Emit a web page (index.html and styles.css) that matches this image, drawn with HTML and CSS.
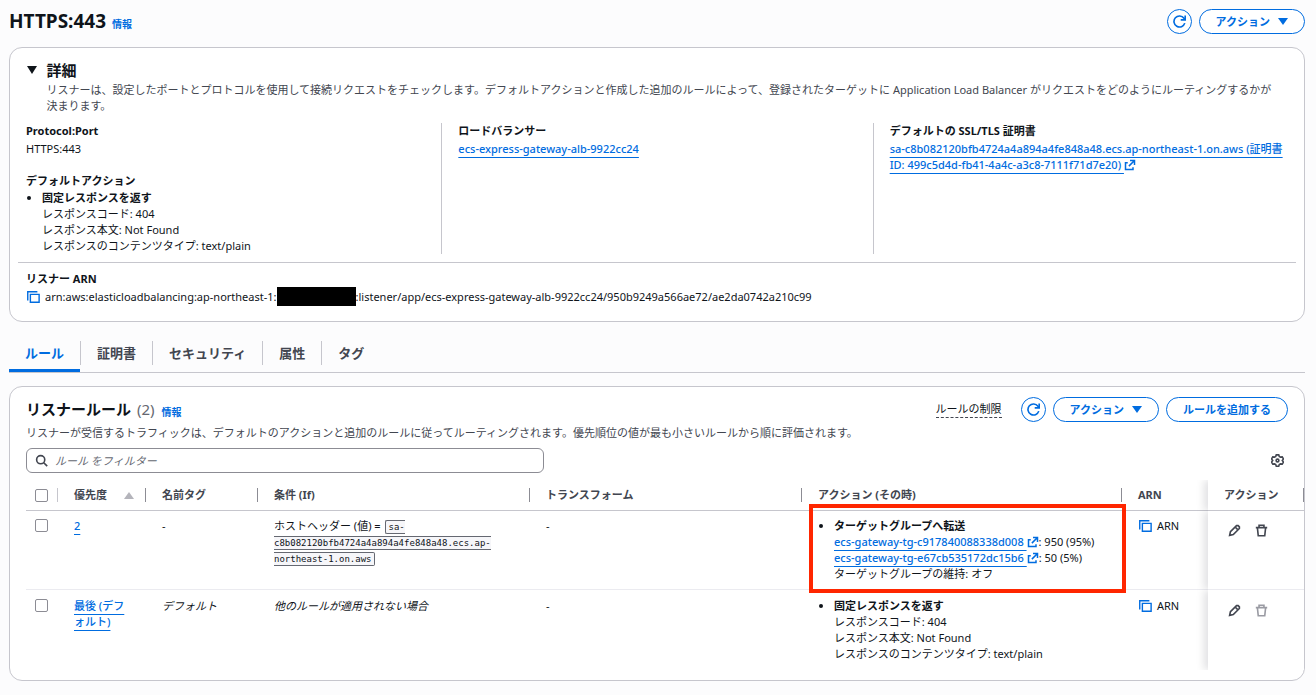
FILE: index.html
```html
<!DOCTYPE html>
<html lang="ja">
<head>
  <meta charset="UTF-8" />
  <meta name="viewport" content="width=device-width, initial-scale=1" />
  <title>HTTPS:443 - リスナー</title>
  <link rel="stylesheet" href="styles.css">
</head>
<body>

  <!-- Iconos compartidos -->
  <svg class="sprite" aria-hidden="true">
    <symbol id="icon-refresh" viewBox="0 0 16 16">
      <path d="M14.5 10A6.8 6.8 0 1 1 13.5 4L14.5 5.500" />
      <path d="M9.500 6H15V.5" />
    </symbol>
    <symbol id="icon-copy" viewBox="0 0 16 16">
      <path d="M2 12V2h11" />
      <path d="M5 5h10v9H5z" />
    </symbol>
    <symbol id="icon-external" viewBox="0 0 16 16">
      <path d="M5 5H2v9h10v-3" />
      <path d="M8 2h6v6M14 2L6.500 9.500" />
    </symbol>
    <symbol id="icon-search" viewBox="0 0 16 16">
      <circle cx="7" cy="7" r="5" />
      <path d="M10.8 10.8L15 15" />
    </symbol>
    <symbol id="icon-gear" viewBox="0 0 16 16">
      <path d="M6.500 1h3l.7 2 1.500.9 2.100-.4 1.500 2.600L13.900 8l1.400 1.900-1.500 2.600-2.100-.4-1.500.9-.7 2h-3l-.7-2-1.500-.9-2.100.4L.7 9.900 2.100 8 .7 6.100l1.500-2.600 2.100.4 1.500-.9z" />
      <circle cx="8" cy="8" r="1.700" />
    </symbol>
    <symbol id="icon-edit" viewBox="0 0 16 16">
      <path d="M2 14l1-4.500L10.500 2h2L14 3.500v2L6.500 13z" />
      <path d="M9 4l3 3" />
    </symbol>
    <symbol id="icon-trash" viewBox="0 0 16 16">
      <path d="M1 4.500h14M5 4V1.500h6V4M3 5l1 9.500h8L13 5" />
    </symbol>
  </svg>

  <header class="page-header">
    <h1>HTTPS:443</h1>
    <a class="info" href="#">情報</a>
    <div class="buttons">
      <button class="btn btn-icon" aria-label="更新"><svg class="icon"><use href="#icon-refresh" /></svg></button>
      <button class="btn">アクション <span class="caret"></span></button>
    </div>
  </header>

  <section class="panel details">
    <div class="details-header">
      <button class="toggle" aria-label="詳細"><span class="caret"></span></button>
      <div>
        <h2>詳細</h2>
        <p class="description">リスナーは、設定したポートとプロトコルを使用して接続リクエストをチェックします。デフォルトアクションと作成した追加のルールによって、登録されたターゲットに Application Load Balancer がリクエストをどのようにルーティングするかが決まります。</p>
      </div>
    </div>

    <div class="columns">
      <div class="column">
        <h3>Protocol:Port</h3>
        <p>HTTPS:443</p>
        <h3 class="spaced">デフォルトアクション</h3>
        <ul class="action-list">
          <li><strong>固定レスポンスを返す</strong>
            <div>レスポンスコード: 404</div>
            <div>レスポンス本文: Not Found</div>
            <div>レスポンスのコンテンツタイプ: text/plain</div>
          </li>
        </ul>
      </div>
      <div class="column">
        <h3>ロードバランサー</h3>
        <p><a href="#">ecs-express-gateway-alb-9922cc24</a></p>
      </div>
      <div class="column">
        <h3>デフォルトの SSL/TLS 証明書</h3>
        <p><a href="#">sa-c8b082120bfb4724a4a894a4fe848a48.ecs.ap-northeast-1.on.aws (証明書 ID: 499c5d4d-fb41-4a4c-a3c8-7111f71d7e20)&nbsp;<svg class="icon external"><use href="#icon-external" /></svg></a></p>
      </div>
    </div>

    <div class="arn">
      <h3>リスナー ARN</h3>
      <div class="copy-row">
        <button class="copy" aria-label="コピー"><svg class="icon"><use href="#icon-copy" /></svg></button>
        <span>arn:aws:elasticloadbalancing:ap-northeast-1:</span><span class="redacted"></span><span>:listener/app/ecs-express-gateway-alb-9922cc24/950b9249a566ae72/ae2da0742a210c99</span>
      </div>
    </div>
  </section>

  <nav class="tabs">
    <a class="active" href="#">ルール</a>
    <a href="#">証明書</a>
    <a href="#">セキュリティ</a>
    <a href="#">属性</a>
    <a href="#">タグ</a>
  </nav>

  <section class="panel rules">
    <div class="rules-header">
      <h2>リスナールール <span class="count">(2)</span></h2>
      <a class="info" href="#">情報</a>
      <div class="buttons">
        <span class="limits">ルールの制限</span>
        <button class="btn btn-icon" aria-label="更新"><svg class="icon"><use href="#icon-refresh" /></svg></button>
        <button class="btn">アクション <span class="caret"></span></button>
        <button class="btn">ルールを追加する</button>
      </div>
    </div>
    <p class="description">リスナーが受信するトラフィックは、デフォルトのアクションと追加のルールに従ってルーティングされます。優先順位の値が最も小さいルールから順に評価されます。</p>

    <div class="filter-row">
      <label class="filter">
        <svg class="icon"><use href="#icon-search" /></svg>
        <input type="text" placeholder="ルール をフィルター" aria-label="ルール をフィルター">
      </label>
      <button class="settings" aria-label="設定"><svg class="icon"><use href="#icon-gear" /></svg></button>
    </div>

    <table>
      <colgroup>
        <col class="col-select">
        <col class="col-priority">
        <col class="col-name">
        <col>
        <col>
        <col class="col-action">
        <col class="col-arn">
        <col class="col-buttons">
      </colgroup>
      <thead>
        <tr>
          <th class="select"><input type="checkbox" aria-label="すべて選択"></th>
          <th><div class="sort">優先度 <span class="caret up"></span></div></th>
          <th>名前タグ</th>
          <th>条件 (If)</th>
          <th>トランスフォーム</th>
          <th>アクション (その時)</th>
          <th class="last-scroll">ARN</th>
          <th class="sticky">アクション</th>
        </tr>
      </thead>
      <tbody>
        <tr>
          <td class="select"><input type="checkbox" aria-label="ルール 2"></td>
          <td><a href="#">2</a></td>
          <td>-</td>
          <td>ホストヘッダー (値) = <code>sa-c8b082120bfb4724a4a894a4fe848a48.ecs.ap-northeast-1.on.aws</code></td>
          <td>-</td>
          <td class="highlighted">
            <ul class="action-list">
              <li><strong>ターゲットグループへ転送</strong>
                <div><a href="#">ecs-gateway-tg-c917840088338d008&nbsp;<svg class="icon external"><use href="#icon-external" /></svg></a>: 950 (95%)</div>
                <div><a href="#">ecs-gateway-tg-e67cb535172dc15b6&nbsp;<svg class="icon external"><use href="#icon-external" /></svg></a>: 50 (5%)</div>
                <div>ターゲットグループの維持: オフ</div>
              </li>
            </ul>
          </td>
          <td><div class="copy-row"><button class="copy" aria-label="コピー"><svg class="icon"><use href="#icon-copy" /></svg></button><span>ARN</span></div></td>
          <td class="sticky">
            <div class="row-buttons">
              <button aria-label="編集"><svg class="icon"><use href="#icon-edit" /></svg></button>
              <button aria-label="削除"><svg class="icon"><use href="#icon-trash" /></svg></button>
            </div>
          </td>
        </tr>
        <tr>
          <td class="select"><input type="checkbox" aria-label="デフォルトルール"></td>
          <td><a href="#">最後 (デフォルト)</a></td>
          <td><em>デフォルト</em></td>
          <td><em>他のルールが適用されない場合</em></td>
          <td>-</td>
          <td>
            <ul class="action-list">
              <li><strong>固定レスポンスを返す</strong>
                <div>レスポンスコード: 404</div>
                <div>レスポンス本文: Not Found</div>
                <div>レスポンスのコンテンツタイプ: text/plain</div>
              </li>
            </ul>
          </td>
          <td><div class="copy-row"><button class="copy" aria-label="コピー"><svg class="icon"><use href="#icon-copy" /></svg></button><span>ARN</span></div></td>
          <td class="sticky">
            <div class="row-buttons">
              <button aria-label="編集"><svg class="icon"><use href="#icon-edit" /></svg></button>
              <button aria-label="削除" disabled><svg class="icon"><use href="#icon-trash" /></svg></button>
            </div>
          </td>
        </tr>
      </tbody>
    </table>
  </section>

</body>
</html>
```
FILE: styles.css
```css
* {
  box-sizing: border-box;
}
body {
  margin: 0;
  padding: 9px 11px 13px 9px;
  background-color: #fcfcfd;
  color: #0f141a;
  font-family: "Noto Sans", "Noto Sans CJK JP", sans-serif;
  font-size: 11px;
  line-height: 16px;
}
h1, h2, h3, p, ul {
  margin: 0;
  padding: 0;
}
h1 {
  font-size: 19px;
  line-height: 24px;
}
h2 {
  font-size: 15px;
  line-height: 20px;
}
h3 {
  font-size: 11px;
  line-height: 16px;
}
a {
  color: #006ce0;
  font-weight: 500;
  text-underline-offset: 4px;
}
button, input {
  font: inherit;
  color: inherit;
}
button {
  margin: 0;
  padding: 0;
  border: none;
  background: none;
  cursor: pointer;
}
.sprite {
  display: none;
}
.icon {
  display: block;
  width: 13px;
  height: 13px;
  fill: none;
  stroke: currentColor;
  stroke-width: 2;
}
.icon.external {
  display: inline-block;
  width: 12px;
  height: 12px;
  vertical-align: -2px;
}
.caret {
  display: inline-block;
  border: 5px solid transparent;
  border-top: 7px solid currentColor;
  border-bottom: 0;
}
.caret.up {
  border-top: 0;
  border-bottom: 7px solid #b4b4bb;
}
.info {
  font-size: 10px;
  font-weight: bold;
  text-decoration: none;
}
.description {
  color: #424650;
}

/* botones */
.buttons {
  display: flex;
  align-items: center;
  gap: 7px;
  margin-left: auto;
}
.btn {
  display: flex;
  align-items: center;
  gap: 8px;
  height: 25px;
  padding: 0 16px;
  border: 1px solid #006ce0;
  border-radius: 13px;
  background-color: #fff;
  color: #006ce0;
  font-weight: bold;
}
.btn-icon {
  justify-content: center;
  width: 25px;
  padding: 0;
}

.page-header {
  display: flex;
  align-items: center;
  gap: 6px;
  height: 25px;
  margin-bottom: 13px;
}
.page-header h1 {
  padding-bottom: 2px;
}
.page-header .info {
  padding-top: 4px;
}

.panel {
  border: 1px solid #c6c6cd;
  border-radius: 13px;
  background-color: #fff;
}

/* detalles */
.details-header {
  display: flex;
  gap: 9px;
  padding: 11px 16px 9px;
}
.details-header p {
  padding-right: 12px;
}
.toggle {
  align-self: flex-start;
  height: 22px;
  width: 12px;
}
.toggle .caret {
  border-top-width: 8px;
}
.details-header h2 {
  line-height: 23px;
}
.columns {
  display: grid;
  grid-template-columns: repeat(3, 1fr);
}
.column {
  padding: 0 16px;
}
.column + .column {
  border-left: 1px solid #c6c6cd;
}
.column p {
  padding-top: 2px;
}
.spaced {
  margin-top: 16px;
}
.action-list {
  padding-left: 16px;
}
.column .action-list {
  padding-top: 1px;
}
.arn {
  margin: 8px 8px 0;
  padding: 8px 8px 15px;
  border-top: 1px solid #c6c6cd;
}
.copy-row {
  display: flex;
  align-items: center;
}
.copy {
  margin-right: 5px;
  color: #006ce0;
}
.copy .icon {
  width: 14px;
  height: 14px;
  stroke-width: 1.6;
}
.redacted {
  width: 79px;
  height: 19px;
  background-color: #000;
}

/* pestañas */
.tabs {
  display: flex;
  align-items: center;
  height: 39px;
  margin: 12px 0 13px;
  border-bottom: 1px solid #c6c6cd;
}
.tabs a {
  padding: 3px 16px;
  border-left: 1px solid #c6c6cd;
  color: #424650;
  font-size: 13px;
  font-weight: bold;
  line-height: 18px;
  text-decoration: none;
}
.tabs a.active {
  align-self: stretch;
  padding-top: 10px;
  border-left: none;
  border-bottom: 3px solid #006ce0;
  color: #006ce0;
}

/* reglas */
.rules {
  padding: 10px 0 10px 16px;
}
.rules-header {
  display: flex;
  align-items: center;
  gap: 7px;
  padding-right: 16px;
}
.rules-header h2 {
  padding-bottom: 2px;
}
.rules-header .info {
  padding-top: 4px;
}
.count {
  margin-left: 2px;
  color: #656871;
  font-weight: normal;
}
.limits {
  margin-right: 12px;
  border-bottom: 1px dashed #424650;
}
.rules .description {
  padding-top: 3px;
}
.filter-row {
  display: flex;
  align-items: center;
  justify-content: space-between;
  padding: 7px 20px 7px 0;
}
.filter {
  display: flex;
  align-items: center;
  gap: 7px;
  width: 518px;
  height: 25px;
  padding: 0 8px;
  border: 1px solid #8c8c94;
  border-radius: 6px;
  color: #424650;
}
.filter input {
  flex: 1;
  padding: 0;
  border: none;
  outline: none;
  background: none;
}
.filter input::placeholder {
  color: #656871;
  font-style: italic;
}
.settings {
  color: #424650;
}

table {
  width: 100%;
  border-collapse: separate;
  border-spacing: 0;
  table-layout: fixed;
}
.col-select {
  width: 32px;
}
.col-priority {
  width: 88px;
}
.col-name {
  width: 112px;
}
.col-action {
  width: 320px;
}
.col-arn {
  width: 86px;
}
.col-buttons {
  width: 96px;
}
th {
  position: relative;
  height: 31px;
  padding: 0 16px;
  border-bottom: 1px solid #c6c6cd;
  color: #424650;
  text-align: left;
}
/* separador de columna */
th::after {
  content: "";
  position: absolute;
  top: 8px;
  right: 0;
  width: 1px;
  height: 14px;
  background-color: #8c8c94;
}
th.select::after {
  background-color: #c6c6cd;
}
th.last-scroll::after {
  display: none;
}
td {
  height: 80px;
  padding: 7px 16px;
  vertical-align: top;
}
tbody tr:first-child td {
  height: 79px;
  border-bottom: 1px solid #ebebf0;
}
tbody tr:last-child td {
  padding-top: 8px;
}
.select {
  padding-left: 9px;
  padding-right: 0;
}
.select input {
  display: block;
  appearance: none;
  width: 13px;
  height: 13px;
  margin: 0;
  border: 1px solid #8c8c94;
  border-radius: 2px;
  background-color: #fff;
}
td.select input {
  margin-top: 1px;
}
.sort {
  display: flex;
  align-items: center;
  justify-content: space-between;
  margin-right: -4px;
}
code {
  margin-left: 2px;
  padding: 1px 2px;
  border: 1px solid #656871;
  border-radius: 2px;
  background-color: #f6f6f9;
  font-family: "DejaVu Sans Mono", monospace;
  font-size: 9px;
  line-height: 12px;
}
.sticky {
  background-color: #fff;
  box-shadow: -4px 0 8px rgba(0, 7, 22, 0.12);
  clip-path: inset(0 0 0 -24px);
}
.row-buttons {
  display: flex;
  gap: 14px;
  padding: 6px 0 0 4px;
}
.row-buttons button {
  color: #424650;
}
.row-buttons button:disabled {
  color: #9a9ba3;
}
.highlighted {
  position: relative;
}
/* recuadro rojo sobre la acción */
.highlighted::after {
  content: "";
  position: absolute;
  top: -7px;
  left: 7px;
  right: -4px;
  bottom: -4px;
  border: 4px solid #ff2600;
}
```
